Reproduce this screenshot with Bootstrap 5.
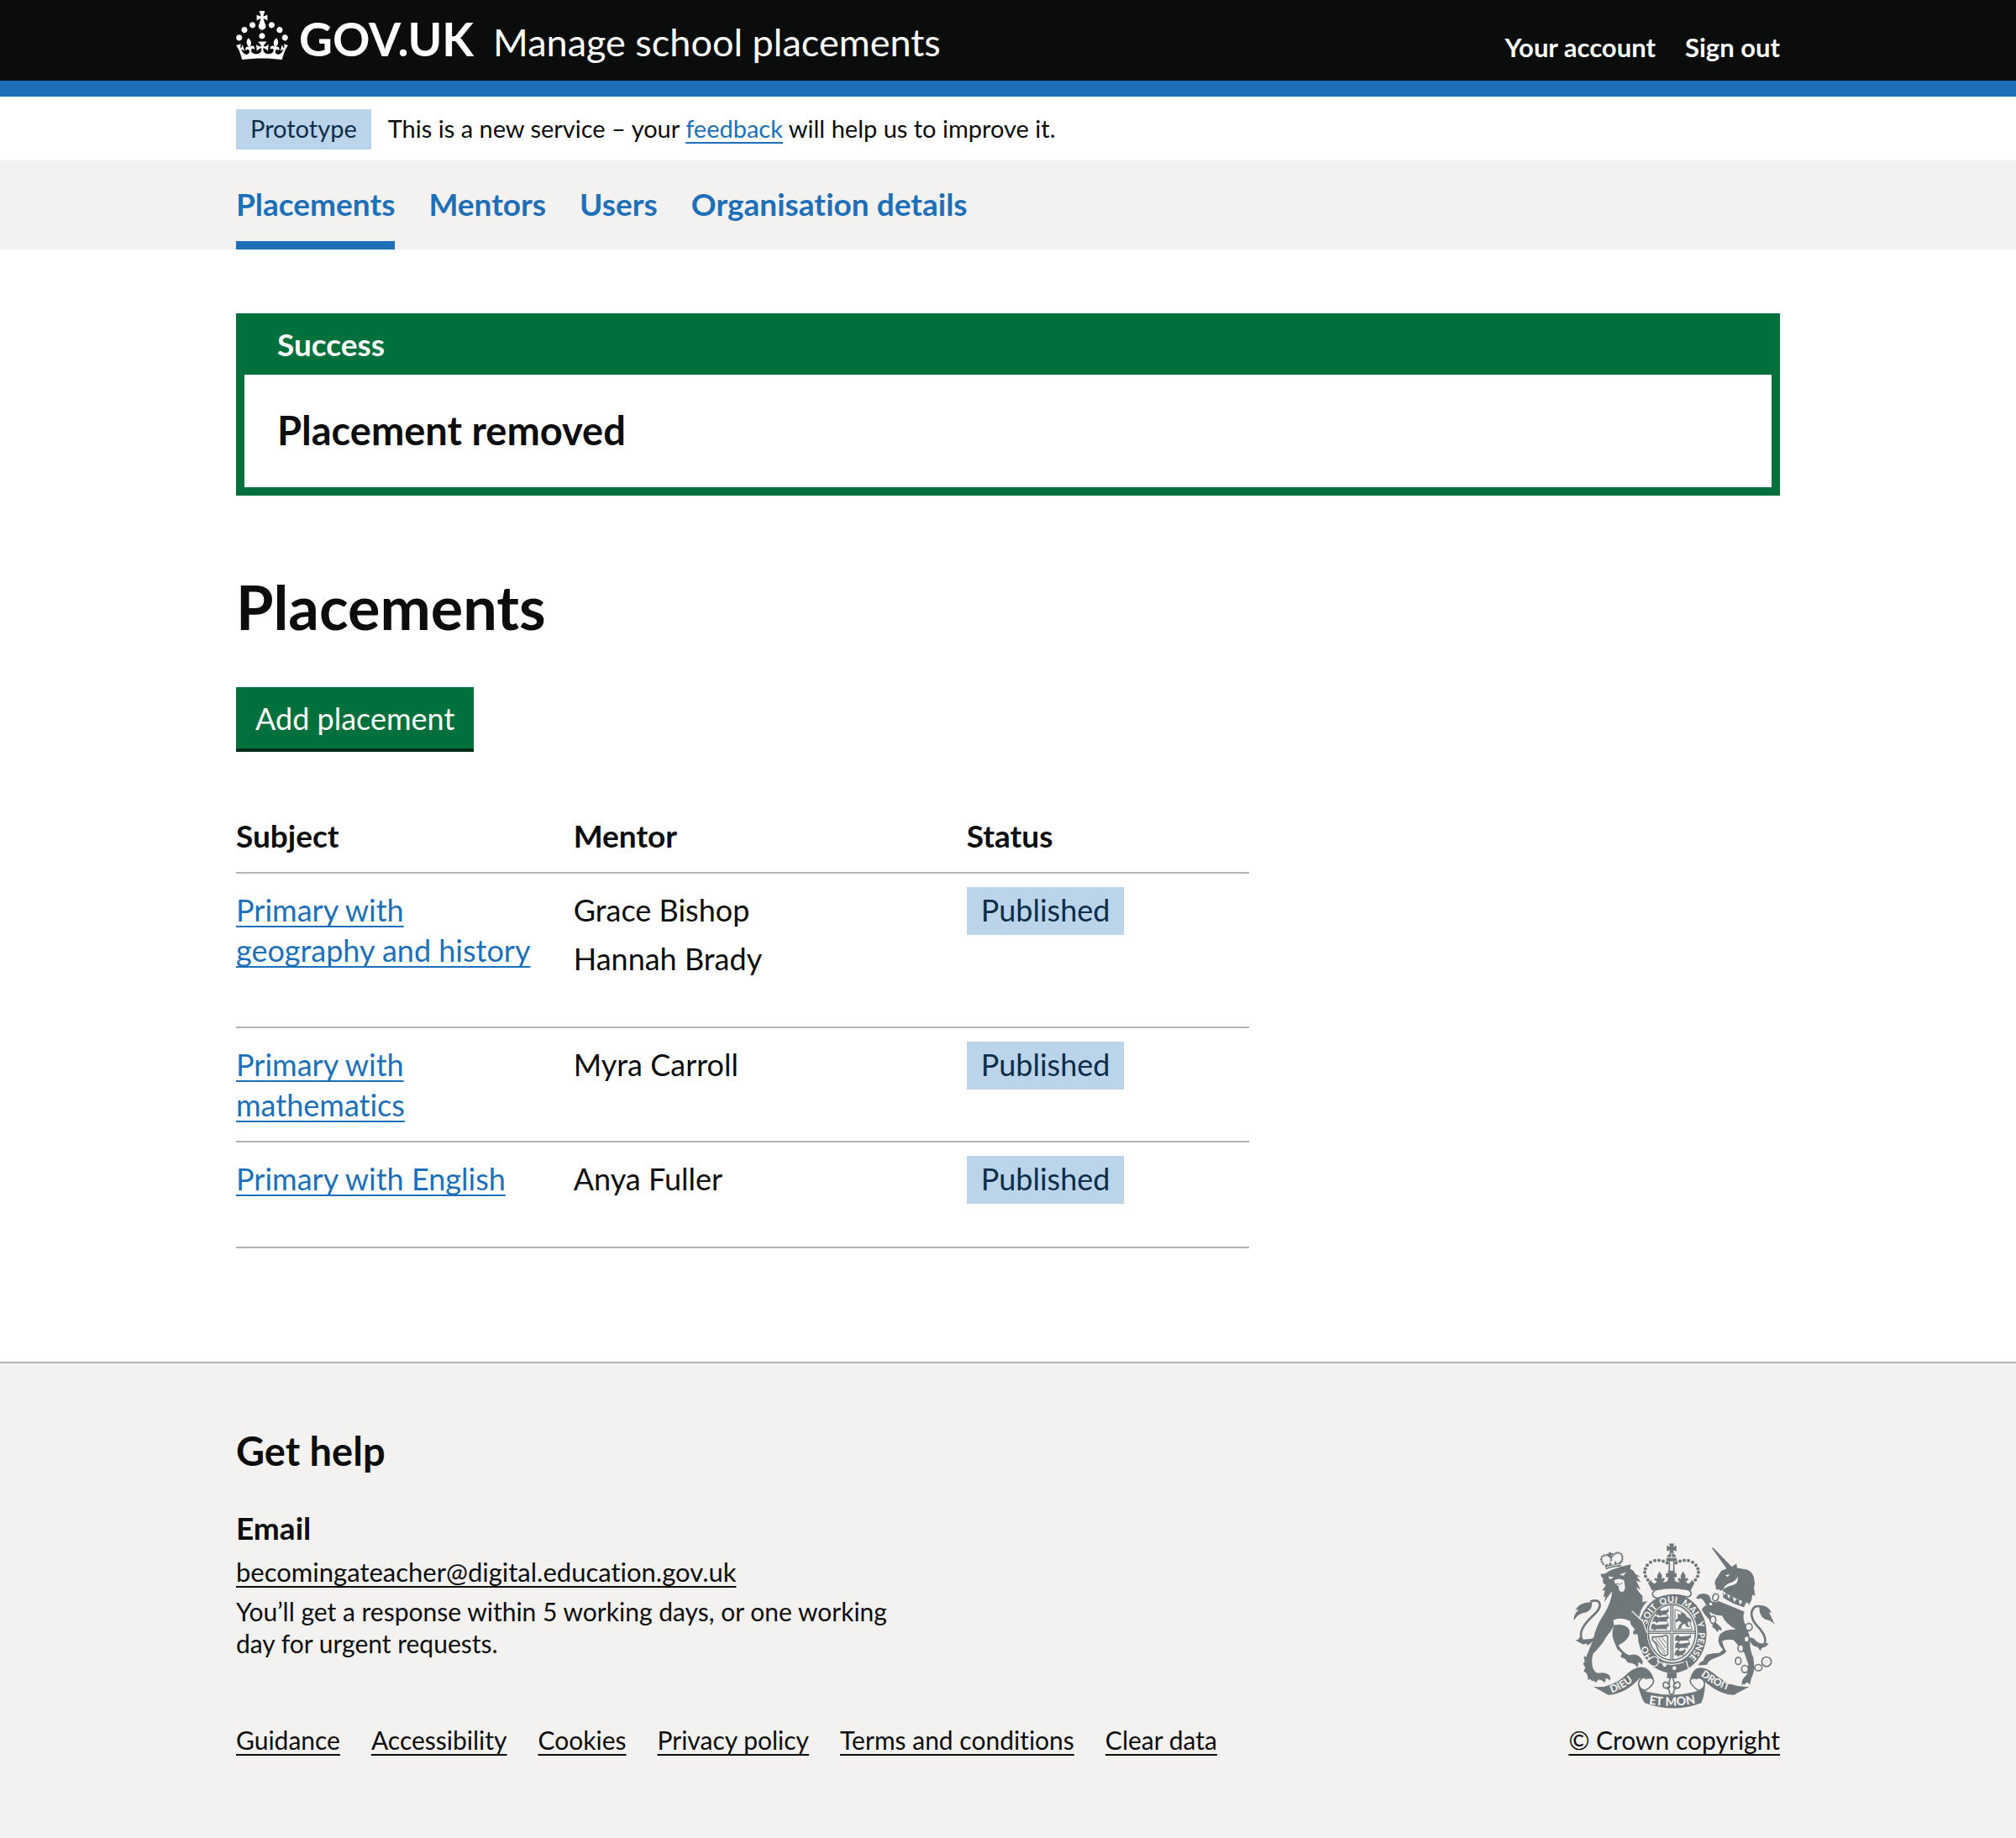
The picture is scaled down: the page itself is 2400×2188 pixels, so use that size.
<!DOCTYPE html>
<html lang="en">
<head>
<meta charset="utf-8">
<meta name="viewport" content="width=device-width, initial-scale=1">
<title>Placements - Manage school placements</title>
<link rel="stylesheet" href="https://cdn.jsdelivr.net/npm/bootstrap@5.3.0/dist/css/bootstrap.min.css">
<style>
:root{
  --ink:#0b0c0c; --brand:#1d70b8; --rule:#b1b4b6; --pale:#f3f2f1; --ok:#00703c;
  --tag-bg:#bbd4ea; --tag-ink:#0c2d4a;
}
body{font-family:Lato,"Liberation Sans",sans-serif;font-size:36px;line-height:48px;font-variant-ligatures:no-common-ligatures;color:var(--ink);background:#fff}
h1,h2,h3,p{color:inherit;margin:0;font-weight:700}
.page-width{width:100%;max-width:1838px;margin-inline:auto}
.text-link{color:var(--brand);text-decoration:underline;text-decoration-thickness:2px;text-underline-offset:5px;text-decoration-skip-ink:none}
.text-link:hover{text-decoration-thickness:4px}
.text-link.dark-link{color:var(--ink)}
.status-tag{display:inline-block;background:var(--tag-bg);color:var(--tag-ink);padding:0 17px}

.site-header{background:var(--ink);border-bottom:19px solid var(--brand);color:#fff}
.site-header a{color:#fff;text-decoration:none}
.site-header .page-width{height:96px}
.crown{width:62px;height:58px;margin:13px 13px 0 0}
.wordmark{font-size:55px;line-height:56px;font-weight:700}
.service-name{font-size:45px;line-height:56px;margin-left:23px}
.brand-text{padding-top:18px}
.account-links{font-size:31px;line-height:48px;font-weight:700;gap:35px}

.phase-bar{font-size:29px;line-height:46px;padding:15px 0 13px}
.phase-bar .status-tag{margin-right:20px;padding-bottom:2px}
.primary-nav{background:var(--pale)}
.primary-nav .nav{gap:40px}
.primary-nav .nav-link{font-size:37px;font-weight:700;color:var(--brand);padding:28px 0 20px;border-bottom:10px solid transparent}
.primary-nav .nav-link.active{border-color:var(--brand)}

main{padding:76px 0 134px}
.notice{border:10px solid var(--ok)}
.notice-title{background:var(--ok);color:#fff;font-size:37px;line-height:48px;padding:3px 39px 12px}
.notice-body{font-size:47px;line-height:57px;padding:38px 39px 39px}
.page-title{font-size:72px;line-height:76px;margin-top:94px}
.add-btn{font-size:36px;line-height:48px;background:var(--ok);color:#fff;border:0;border-radius:0;padding:13px 23px 12px;box-shadow:0 4px 0 #002d18;margin:58px 0 61px}
.add-btn:hover{background:#005a30;color:#fff}
.placements-row{--bs-gutter-x:57px}
.placements{--bs-table-bg:transparent;--bs-table-color:var(--ink);table-layout:fixed;margin:0;color:var(--ink)}
.placements th,.placements td{padding:19px 38px 19px 0;border:0;border-bottom:2px solid var(--rule);vertical-align:top}
.placements thead th{font-size:37px}
.placements .status-tag{margin:-3px 0;padding:3px 17px 6px}
.mentors li{margin-bottom:10px}
.mentors{margin:0;padding-bottom:28px}

.site-footer{background:var(--pale);border-top:2px solid var(--rule);padding:76px 0 98px}
.help-title{font-size:47px;line-height:57px;margin-bottom:39px}
.help-sub{font-size:37px;line-height:48px;margin-bottom:9px}
.help-list li{line-height:38px;font-size:30px;margin-bottom:9px;max-width:790px}
.help-list a{font-size:31px}
.help-list{margin-bottom:77px}
.foot-links{gap:37px;font-size:30px;line-height:38px}
.crest-link{font-size:30px;line-height:38px}
.crest{width:240px;height:197px;margin:0 6px 18px auto}
.crest text{font-family:Lato,sans-serif;font-weight:900;fill:var(--pale)}
</style>
</head>
<body class="d-flex flex-column min-vh-100">

<header class="site-header">
  <div class="page-width d-flex justify-content-between">
    <a href="#" class="d-flex align-items-start">
      <svg class="crown" viewBox="0 0 32 30" fill="#fff" aria-hidden="true"><path d="M22.6 10.4c-1 .4-2-.1-2.4-1-.4-.9.1-2 1-2.4.9-.4 2 .1 2.4 1s-.1 2-1 2.4m-5.9 6.7c-.9.4-2-.1-2.4-1-.4-.9.1-2 1-2.4.9-.4 2 .1 2.4 1s-.1 2-1 2.4m10.8-3.7c-1 .4-2-.1-2.4-1-.4-.9.1-2 1-2.4.9-.4 2 .1 2.4 1s0 2-1 2.4m3.3 4.8c-1 .4-2-.1-2.4-1-.4-.9.1-2 1-2.4.9-.4 2 .1 2.4 1s-.1 2-1 2.4M17 4.7l2.3 1.2V2.5l-2.3.7-.2-.2.9-3h-3.4l.9 3-.2.2c-.1.1-2.3-.7-2.3-.7v3.4L15 4.7c.1.1.1.2.2.2l-1.3 4c-.1.2-.1.4-.1.6 0 1.1.8 2 1.9 2.2h.7c1-.2 1.9-1.1 1.9-2.1 0-.2 0-.4-.1-.6l-1.3-4c-.1-.2 0-.2.1-.3m-7.6 5.7c.9.4 2-.1 2.4-1 .4-.9-.1-2-1-2.4-.9-.4-2 .1-2.4 1s0 2 1 2.4m-5 3c.9.4 2-.1 2.4-1 .4-.9-.1-2-1-2.4-.9-.4-2 .1-2.4 1s.1 2 1 2.4m-3.2 4.8c.9.4 2-.1 2.4-1 .4-.9-.1-2-1-2.4-.9-.4-2 .1-2.4 1s0 2 1 2.4m14.8 11c4.4 0 8.6.3 12.3.8 1.1-4.5 2.4-7 3.7-8.8l-2.5-.9c.2 1.3.3 1.9 0 2.7-.4-.4-.8-1.1-1.1-2.3l-1.2 4c.7-.5 1.3-.8 2-.9-1.1 2.5-2.6 3.1-3.5 3-1.1-.2-1.7-1.2-1.5-2.1.3-1.2 1.5-1.5 2.1-.1 1.1-2.3-.8-3-2-2.3 1.9-1.9 2.1-3.5.6-5.6-2.1 1.6-2.1 3.2-1.2 5.5-1.2-1.4-3.2-.6-2.5 1.6.9-1.4 2.1-.5 1.9.8-.2 1.1-1.7 2.1-3.5 1.9-2.7-.2-2.9-2.1-2.9-3.6.7-.1 1.9.5 2.9 1.9l.4-4.3c-1.1 1.1-2.1 1.4-3.2 1.4.4-1.2 2.1-3 2.1-3h-5.4s1.7 1.9 2.1 3c-1.1 0-2.1-.2-3.2-1.4l.4 4.3c1-1.4 2.2-2 2.9-1.9-.1 1.5-.2 3.4-2.9 3.6-1.9.2-3.4-.8-3.5-1.9-.2-1.3 1-2.2 1.9-.8.7-2.3-1.2-3-2.5-1.6.9-2.2.9-3.9-1.2-5.5-1.5 2-1.3 3.7.6 5.6-1.2-.7-3.1 0-2 2.3.6-1.4 1.8-1.1 2.1.1.2.9-.3 1.9-1.5 2.1-.9.2-2.4-.5-3.5-3 .6 0 1.2.3 2 .9l-1.2-4c-.3 1.1-.7 1.9-1.1 2.3-.3-.8-.2-1.4 0-2.7l-2.9.9C1.3 23 2.6 25.5 3.7 30c3.7-.5 7.9-.8 12.3-.8"/></svg>
      <span class="brand-text d-flex align-items-baseline">
        <span class="wordmark">GOV.UK</span>
        <span class="service-name">Manage school placements</span>
      </span>
    </a>
    <nav class="account-links d-flex align-items-end pb-3" aria-label="Account">
      <a href="#">Your account</a>
      <a href="#">Sign out</a>
    </nav>
  </div>
</header>

<div class="phase-bar">
  <div class="page-width d-flex align-items-start">
    <strong class="status-tag fw-normal">Prototype</strong>
    <span>This is a new service – your <a href="#" class="text-link">feedback</a> will help us to improve it.</span>
  </div>
</div>

<nav class="primary-nav" aria-label="Primary">
  <div class="page-width">
    <ul class="nav">
      <li class="nav-item"><a class="nav-link active" aria-current="page" href="#">Placements</a></li>
      <li class="nav-item"><a class="nav-link" href="#">Mentors</a></li>
      <li class="nav-item"><a class="nav-link" href="#">Users</a></li>
      <li class="nav-item"><a class="nav-link" href="#">Organisation details</a></li>
    </ul>
  </div>
</nav>

<main class="page-width flex-grow-1">
  <section class="notice" role="alert">
    <h2 class="notice-title">Success</h2>
    <h3 class="notice-body">Placement removed</h3>
  </section>

  <h1 class="page-title">Placements</h1>
  <button type="button" class="btn add-btn d-block">Add placement</button>

  <div class="row placements-row">
    <div class="col-8">
      <table class="table placements">
        <colgroup><col style="width:33.3%"><col style="width:38.8%"><col></colgroup>
        <thead>
          <tr><th scope="col">Subject</th><th scope="col">Mentor</th><th scope="col">Status</th></tr>
        </thead>
        <tbody>
          <tr>
            <td><a href="#" class="text-link">Primary with geography and history</a></td>
            <td><ul class="list-unstyled mentors"><li>Grace Bishop</li><li>Hannah Brady</li></ul></td>
            <td><strong class="status-tag fw-normal">Published</strong></td>
          </tr>
          <tr>
            <td><a href="#" class="text-link">Primary with mathematics</a></td>
            <td><ul class="list-unstyled mentors"><li>Myra Carroll</li></ul></td>
            <td><strong class="status-tag fw-normal">Published</strong></td>
          </tr>
          <tr>
            <td><a href="#" class="text-link">Primary with English</a></td>
            <td><ul class="list-unstyled mentors"><li>Anya Fuller</li></ul></td>
            <td><strong class="status-tag fw-normal">Published</strong></td>
          </tr>
        </tbody>
      </table>
    </div>
  </div>
</main>

<footer class="site-footer">
  <div class="page-width d-flex justify-content-between align-items-end">
    <div>
      <h2 class="help-title">Get help</h2>
      <h3 class="help-sub">Email</h3>
      <ul class="list-unstyled help-list">
        <li><a href="#" class="text-link dark-link">becomingateacher@digital.education.gov.uk</a></li>
        <li>You’ll get a response within 5 working days, or one working day for urgent requests.</li>
      </ul>
      <ul class="list-unstyled d-flex flex-wrap foot-links mb-0">
        <li><a href="#" class="text-link dark-link">Guidance</a></li>
        <li><a href="#" class="text-link dark-link">Accessibility</a></li>
        <li><a href="#" class="text-link dark-link">Cookies</a></li>
        <li><a href="#" class="text-link dark-link">Privacy policy</a></li>
        <li><a href="#" class="text-link dark-link">Terms and conditions</a></li>
        <li><a href="#" class="text-link dark-link">Clear data</a></li>
      </ul>
    </div>
    <div class="crest-link text-end">
      <svg class="crest d-block" viewBox="71 56 720 590" fill="#6f777b" aria-hidden="true">
        <defs>
          <path id="garter" d="M330 378A94 110 0 0 1 518 378A94 110 0 0 1 424 488"/>
          <path id="garter-start" d="M356 466Q332 436 328 384"/>
          <path id="dieu" d="M208 591Q262 572 306 530"/>
          <path id="mon" d="M340 630Q424 644 508 627"/>
          <path id="droit" d="M526 528Q580 572 656 590"/>
        </defs>
        <!-- centre crown -->
        <path d="M412 57h20l-5 12 12-5v21l-12-5 4 11h-18l4-11-12 5V64l12 5z"/>
        <path d="M403 120q0-26 19-29 19 3 19 29z"/>
        <path d="M403 107h38M422 92v15" stroke="#f3f2f1" stroke-width="3" fill="none"/>
        <path d="M414 120v42M430 120v42" stroke="#6f777b" stroke-width="5" fill="none"/>
        <g><circle cx="406" cy="126" r="6"/><circle cx="392" cy="120" r="6"/><circle cx="377" cy="117" r="6"/><circle cx="362" cy="118" r="6"/><circle cx="347" cy="124" r="6"/><circle cx="335" cy="134" r="6"/><circle cx="328" cy="147" r="6"/><circle cx="326" cy="160" r="6"/><circle cx="329" cy="174" r="6"/><circle cx="337" cy="187" r="6"/>
        <circle cx="438" cy="126" r="6"/><circle cx="452" cy="120" r="6"/><circle cx="467" cy="117" r="6"/><circle cx="482" cy="118" r="6"/><circle cx="497" cy="124" r="6"/><circle cx="509" cy="134" r="6"/><circle cx="516" cy="147" r="6"/><circle cx="518" cy="160" r="6"/><circle cx="515" cy="174" r="6"/><circle cx="507" cy="187" r="6"/></g>
        <path d="M352 224L338 198l10-12q2 12 14 14l8-8q-8 0-10-8 6-8 12 0l-2-12 9-16 9 16-2 12q8-8 12 0-2 8-8 10 12 4 18-6l2-12-8 2v-16l8 2-2-10h26l-2 10 8-2v16l-8-2 2 12q6 10 18 6-8-2-8-10 4-8 12 0l-2-12 9-16 9 16-2 12q6-8 12 0-2 8-10 8l8 8q12-2 14-14l10 12-14 26Q422 206 352 224z"/>
        <!-- lion crown -->
        <path d="M188 150L183 134l9-4 5 6 4-14 8 10 8-1 3-13 7 10 7-2 2-7 6 4-1 16q-28 0-53 11z"/>
        <path d="M188 143q24-10 54-12" fill="none" stroke="#f3f2f1" stroke-width="3"/>
        <path d="M180 132Q164 112 176 102Q192 92 206 108Q222 84 238 92Q252 100 242 126M206 104v18" fill="none" stroke="#6f777b" stroke-width="7" stroke-dasharray="7 2"/>
        <path d="M196 86l6 4 4-4 0 6 6-2 0 9-6-2v9h-7l0-7-6 3-1-9 6 1z"/>
        <!-- lion -->
        <path d="M168 166L186 164Q194 156 204 152Q238 138 277 131L274 148Q288 152 292 166L310 175L298 175L312 195L296 190L311 222L295 212Q304 232 318 243L318 266L336 262Q306 292 304 336L334 376L334 394L326 386L324 400L316 388L306 394L302 376L288 378L286 368L294 364L278 348L274 334L258 328Q236 320 214 330L216 348Q250 342 266 358Q276 370 270 386Q258 408 232 420Q248 448 272 456Q300 446 316 472Q322 482 316 490Q308 480 302 482Q306 494 298 498Q292 486 276 484Q260 482 258 470L240 462L244 448L228 434L214 400Q206 374 216 350Q204 374 190 388Q174 420 142 450Q136 468 138 486Q140 516 160 520Q184 514 200 528Q206 538 202 546Q192 536 186 538Q188 548 182 553Q172 542 162 542Q156 546 150 554Q146 544 138 548Q132 538 122 544Q126 530 116 518L108 512L114 500L106 486L112 478L108 460L120 462L118 460L142 400Q152 350 180 310Q206 270 210 228Q198 240 182 266L186 244L178 250L184 224L174 224L188 204Q178 204 176 190Q180 178 172 178z"/>
        <path d="M196 174l20 3-14 8zM236 168l24-9-10 13zM216 188q18-10 36 0l4 26q-2 16-12 16-12-2-11-20l-12-10z" fill="#f3f2f1"/>
        <path d="M224 200l14 3 9-7" fill="none" stroke="#6f777b" stroke-width="3"/>
        <path d="M132 264C172 250 174 282 150 306C120 334 98 358 98 384Q98 410 120 408Q150 402 176 362" fill="none" stroke="#6f777b" stroke-width="8"/>
        <path d="M138 266q2 26-20 36-28 2-46 30 0-24 18-38-6-2-12 2 14-32 60-30zM92 392q12-2 14 8l40-4q-10 18-26 26 2-8-4-8-6 4-12 2-14-6-28-16 10 2 14-2z"/>
        <!-- unicorn -->
        <path d="M565 72l6 0 70 72-16 12z"/>
        <path d="M578 188l22-34 30-12 10-4 14-10 2 16 36 6q20 10 24 28l3 22-3 14 4 30-10-4q0 20-12 36l-94-42 2-12-10 4-6-8-2 6-8-6 0-10q-6-6-2-20z"/>
        <path d="M614 170l16-4-8 10zM658 174q4 26-14 30-20 4-38 16 10-20 30-24 16-6 22-22z" fill="#f3f2f1"/>
        <path d="M604 226q40 30 94 44l-14 24q-44-10-82-38z" fill="#f3f2f1"/>
        <path d="M606 228l4 14 8-10 8 22 6-12 8 6 6 18 8-12 8 4 4 18 10-14 14 2-10 20q-40-10-74-34z"/>
        <path d="M588 262l94 38q-10 28 10 60 10 30 10 44-2 30 12 60l4 40q-6 24-12 36l-4 20-10-8-10 8q-6-4-10 4 0-24 14-34l6-8 4-34-14-40-38-46q-24-6-42 4 10 32 16 36-6 12-46 26-18 8-22 18l-2 4-30 2q2-12 16-16 6-14 14-22 20-6 44-6l14-12q-26-24-12-54 20-22 58-18-38-22-50-50-22 0-36-8l-10-6 14 30 22 20q12 8 8 18l-10-4-2 8-8-4-2-6-10-6 0-10-12-18q-26-28-26-38l10-10 6-2q-10-22-22-26-6 6-14 0 4-14 20-16 24-2 30 14l4 14 18 2z"/>
        <g fill="#f3f2f1" stroke="#6f777b" stroke-width="5"><ellipse cx="579" cy="249" rx="10" ry="13" transform="rotate(20 579 249)"/><circle cx="562" cy="273" r="8"/><ellipse cx="570" cy="329" rx="10" ry="13"/><ellipse cx="698" cy="355" rx="12" ry="13"/><ellipse cx="690" cy="398" rx="9" ry="11"/><ellipse cx="669" cy="431" rx="10" ry="13"/><ellipse cx="660" cy="476" rx="10" ry="13"/><ellipse cx="684" cy="505" rx="12" ry="13"/><ellipse cx="732" cy="500" rx="13" ry="11"/><circle cx="761" cy="479" r="17"/></g>
        <path d="M702 394Q738 434 754 414Q764 396 738 362Q702 328 708 300Q718 272 742 284" fill="none" stroke="#6f777b" stroke-width="8"/>
        <path d="M736 278q28-2 42 24-4 2-8 0 10 20 20 44-14-16-34-18-24-14-20-50zM700 400q6 22 26 26 8 2 12 16 4-12 10-14 16-2 20-16-8 2-10 0-26 8-44-18z"/>
        <!-- garter -->
        <ellipse cx="424" cy="378" rx="128" ry="146" fill="#f3f2f1"/>
        <ellipse cx="424" cy="378" rx="123" ry="141"/>
        <ellipse cx="424" cy="375" rx="90" ry="106" fill="#f3f2f1"/>
        <path d="M372 252Q352 250 354 234Q358 222 376 220Q422 212 472 220Q492 222 492 236Q490 250 472 246Q424 232 372 252z" fill="#f3f2f1" stroke="#6f777b" stroke-width="5"/>
        <g font-size="32">
          <text><textPath href="#garter-start">HO</textPath></text>
          <text><textPath href="#garter" startOffset="32">SOIT</textPath></text>
          <text><textPath href="#garter" startOffset="118">QUI</textPath></text>
          <text><textPath href="#garter" startOffset="194">MAL</textPath></text>
          <text><textPath href="#garter" startOffset="280">Y</textPath></text>
          <text><textPath href="#garter" startOffset="316">PENSE</textPath></text>
        </g>
        <path d="M350 464q14-8 24 4l-2 10q48 20 94 2M350 492q20 8 24-8v-16M474 474l10 34" fill="none" stroke="#f3f2f1" stroke-width="4"/>
        <circle cx="397" cy="490" r="7" fill="#f3f2f1"/><circle cx="432" cy="502" r="7" fill="#f3f2f1"/>
        <!-- lion paw over the garter -->
        <path d="M276 296l44 40 14 44-2 18-8-8-2 14-8-12-10 6-4-18-14 2-2-10 10-4-18-24z"/>
        <path d="M280 298l40 38 14 40" fill="none" stroke="#f3f2f1" stroke-width="4"/>
        <!-- shield -->
        <ellipse cx="423" cy="374" rx="84" ry="99" fill="none" stroke="#6f777b" stroke-width="5"/>
        <path d="M423 276v196M340 374h166" fill="none" stroke="#6f777b" stroke-width="11"/>
        <path d="M423 276v196M340 374h166" fill="none" stroke="#f3f2f1" stroke-width="3"/>
        <path d="M370 296l8-5 8 6 20-3 4-8 2 14-8 6 4 8-8-3-14 1-4 6-6-7-12 2 4-8zM358 320l8-5 8 6 32-3 4-8 2 14-8 6 4 8-8-3-26 1-4 6-6-7-12 2 4-8zM350 347l8-5 8 6 40-3 4-8 2 14-8 6 4 8-8-3-34 1-4 6-6-7-8 2z"/>
        <path d="M436 388l8-5 8 6 34-3 4-8 2 14-10 6 4 8-8-3-26 1-4 6-6-7-8 2zM436 414l8-5 8 6 30-3 4-8 2 14-10 6 4 8-8-3-22 1-4 6-6-7-8 2zM436 440l8-5 8 6 14-3 4-8 2 14-8 6 2 8-8-3-8 1-4 6-6-7-8 2z"/>
        <path d="M444 306l10 6 2-10 12 4 8 12 14 8 4 14-10-6-6 8 10 14-12-2-8-12-10 8-2 10-12 2 6-14 8-8-10-8-8 6-6-6 10-8z"/>
        <path d="M434 292q46 10 62 72H434z" fill="none" stroke="#6f777b" stroke-width="3"/>
        <path d="M354 390q26 2 50-6l4 6v62l-8 6q-20-4-28-26-4-20-18-30z" fill="none" stroke="#6f777b" stroke-width="5"/>
        <path d="M364 394l36 50M376 394l26 36M388 392l14 20M364 406l34 46" stroke="#6f777b" stroke-width="3"/>
        <!-- scrolls -->
        <path d="M142 568q58 8 108-34 38-38 66-36 30 4 42 40l-30 2q-10-4-20-2Q258 594 196 598z"/>
        <path d="M700 568q-58 6-114-36-36-34-64-32-24 2-34 40l24 0q10-4 18 0 56 56 114 58z"/>
        <path d="M326 540q30-10 32 8-2 18-30 34-24-6-24-26 4-22 30-24" fill="#f3f2f1" stroke="#6f777b" stroke-width="5"/>
        <path d="M516 540q-26-8-28 8 4 18 30 34 22-6 22-26-4-20-30-22" fill="#f3f2f1" stroke="#6f777b" stroke-width="5"/>
        <path d="M302 560q10 24 42 28 78 18 154 0 34-8 44-28-2 38-14 66-98 38-202 0-16-24-24-66z"/>
        <text font-size="37"><textPath href="#dieu">DIEU</textPath></text>
        <text font-size="43"><textPath href="#mon">ET MON</textPath></text>
        <text font-size="36"><textPath href="#droit">DROIT</textPath></text>
        <path d="M406 518h34v20h-34z"/>
        <path d="M422 530q14 20 6 40 2-12 12-18 14-2 12 14-4 10-14 6-2-6-8 0l6 4-6 6q-2 6 0 8-8 10-16 0 2-4 0-8l-6-6 6-4q-6-6-8 0-10 4-14-6-2-16 12-14 10 6 12 18-8-20 6-40z" fill="#f3f2f1" stroke="#6f777b" stroke-width="5"/>
      </svg>
      <a href="#" class="text-link dark-link">© Crown copyright</a>
    </div>
  </div>
</footer>

<script src="https://cdn.jsdelivr.net/npm/bootstrap@5.3.0/dist/js/bootstrap.bundle.min.js"></script>
</body>
</html>
